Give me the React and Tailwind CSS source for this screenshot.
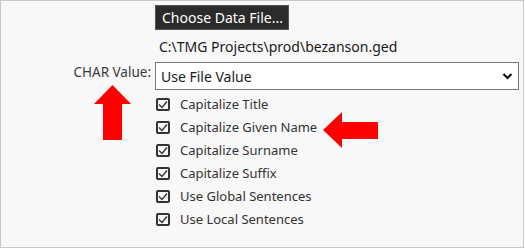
import React from "react";

const items = [
  "Capitalize Title",
  "Capitalize Given Name",
  "Capitalize Surname",
  "Capitalize Suffix",
  "Use Global Sentences",
  "Use Local Sentences",
];

function Box() {
  return (
    <span className="flex h-[13px] w-[14px] items-center justify-center rounded-[2px] border-2 border-[#333] bg-[#f8f8f8]">
      <svg width="10" height="9" viewBox="0 0 10 9" fill="none">
        <path d="M1 4.5 L4 7.5 L9 1.5" stroke="#333" strokeWidth="1.4" />
      </svg>
    </span>
  );
}

export default function App() {
  return (
    <div
      className="relative h-[248px] w-[524px] border border-[#c8c8c8] bg-[#f8f8f8] text-[#333]"
      style={{ fontFamily: '"Noto Sans", sans-serif' }}
    >
      <div className="grid grid-cols-[154px_1fr]">
        <div />
        <div className="pt-[4px]">
          <div className="flex h-[25px] w-[134px] items-center whitespace-nowrap border border-[#555] bg-[#2b2b2b] pl-[6px] text-[14px] leading-none text-white">
            Choose Data File...
          </div>
        </div>
        <div />
        <div className="flex h-[32px] items-center whitespace-nowrap pl-[4px] text-[14px] text-[#1a1a1a]">
          C:\TMG Projects\prod\bezanson.ged
        </div>
        <div className="flex h-[28px] items-center justify-end whitespace-nowrap pb-[8px] pr-[4px] text-[13.5px] text-[#3a3a3a]">
          CHAR Value:
        </div>
        <div className="flex h-[28px] w-[364px] items-center justify-between border border-[#7a7a7a] bg-white pl-[5px] pr-[5px] text-[14px] text-[#1a1a1a]">
          <span>Use File Value</span>
          <svg width="11" height="8" viewBox="0 0 11 8" fill="none">
            <path d="M1.5 2 L5.5 6 L9.5 2" stroke="#111" strokeWidth="2.2" />
          </svg>
        </div>
        <div />
        <div className="flex flex-col pt-[3px]">
          {items.map((t) => (
            <div key={t} className="flex h-[23px] items-center gap-[10px] pl-[1px] text-[13px] whitespace-nowrap">
              <Box />
              <span>{t}</span>
            </div>
          ))}
        </div>
      </div>

      <svg className="absolute left-[92px] top-[84px]" width="39" height="56" viewBox="0 0 39 56">
        <path d="M19.5 0 L38 19 L29 19 L29 55 L10 55 L10 19 L1 19 Z" fill="#ff0000" />
      </svg>
      <svg className="absolute left-[322px] top-[111px]" width="56" height="37" viewBox="0 0 56 37">
        <path d="M0 18 L19 0 L19 10 L55 10 L55 27 L19 27 L19 36 Z" fill="#ff0000" />
      </svg>
    </div>
  );
}
